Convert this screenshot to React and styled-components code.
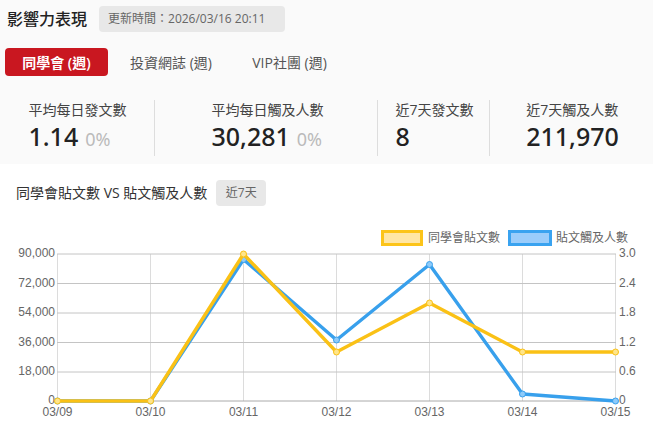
import React from "react";
import styled, { createGlobalStyle } from "styled-components";

const Global = createGlobalStyle`
  html, body { margin: 0; padding: 0; background: #fff; }
  body { font-family: "Open Sans", "Noto Sans CJK TC", sans-serif; overflow: hidden; }
`;
const Page = styled.div`width: 653px; height: 423px; overflow: hidden;`;
const Top = styled.section`background: #fafafa; height: 164px; padding-top: 6px; box-sizing: border-box;`;
const Header = styled.header`display: flex; align-items: center; padding-left: 7px; gap: 12px; height: 26px;`;
const Title = styled.h1`margin: 0; font-size: 16px; font-weight: 500; line-height: 26px; color: #222;`;
const Updated = styled.span`
  background: #e8e8e8; border-radius: 4px; color: #666; font-size: 12px; line-height: 26px;
  padding: 0 9px; width: 186px; box-sizing: border-box; white-space: nowrap;
`;
const Tabs = styled.nav`display: flex; margin: 16px 0 0 5px; height: 28px;`;
const Tab = styled.button`
  border: 0; border-radius: 4px; height: 28px; padding: 0; margin: 0; cursor: pointer;
  font: ${p => (p.$active ? 600 : 400)} 14px "Open Sans", "Noto Sans CJK TC", sans-serif;
  width: ${p => p.$width}px; white-space: nowrap;
  background: ${p => (p.$active ? "#c91720" : "transparent")};
  color: ${p => (p.$active ? "#fff" : "#555")};
`;
const Stats = styled.div`
  display: grid; grid-template-columns: 154px 223px 112px 1fr; margin: 24px 0 0 1px; height: 56px;
`;
const Stat = styled.div`
  display: flex; justify-content: center; height: 56px; box-sizing: border-box;
  padding-left: ${p => p.$shift}px;
  border-right: ${p => (p.$last ? "0" : "1px solid #ddd")};
`;
const StatBody = styled.div`display: flex; flex-direction: column;`;
const StatLabel = styled.div`font-size: 14px; line-height: 20px; color: #444; white-space: nowrap;`;
const StatValue = styled.div`
  font-family: "Noto Sans", "Noto Sans CJK TC", sans-serif;
  font-size: 25px; line-height: 32px; color: #222; font-weight: 500; white-space: nowrap;
  display: flex; align-items: baseline; gap: 7px;
`;
const Delta = styled.span`font-size: 18px; font-weight: 400; color: #bbb;`;
const ChartSection = styled.section`background: #fff;`;
const ChartHead = styled.div`display: flex; align-items: center; gap: 9px; padding: 16px 0 0 16px; height: 26px;`;
const ChartTitle = styled.h2`margin: 0; font-size: 14px; font-weight: 400; color: #333; line-height: 26px; white-space: nowrap;`;
const RangeTag = styled.span`
  background: #e8e8e8; border-radius: 4px; color: #666; font-size: 12px; line-height: 26px;
  width: 50px; text-align: center;
`;
const ChartSvg = styled.svg`display: block; font-family: "Liberation Sans", "Noto Sans CJK TC", sans-serif;`;

const xs = [57.5, 150.5, 243.5, 336.5, 429.5, 522.5, 615.5];
const grid = [254, 283.5, 313, 342.5, 372, 401];
const left = ["90,000", "72,000", "54,000", "36,000", "18,000", "0"];
const right = ["3.0", "2.4", "1.8", "1.2", "0.6", "0"];
const days = ["03/09", "03/10", "03/11", "03/12", "03/13", "03/14", "03/15"];
const blue = [401, 401, 259.5, 340, 264.5, 394, 401];
const yellow = [401, 401, 254, 352, 303, 352, 352];
const OY = 206; // svg top in page coordinates
const pts = a => a.map((y, i) => `${xs[i]},${y - OY}`).join(" ");

const Series = ({ data, stroke, fill }) => (
  <g>
    <polyline points={pts(data)} fill="none" stroke={stroke} strokeWidth="3.4" strokeLinejoin="round" />
    {data.map((y, i) => (
      <circle key={i} cx={xs[i]} cy={y - OY} r="3" fill={fill} stroke={stroke} strokeWidth="1" />
    ))}
  </g>
);

const Chart = () => (
  <ChartSvg width="653" height="217" viewBox="0 0 653 217">
    <rect x="382.5" y="25.5" width="39" height="13" fill="#ffe6a5" stroke="#fcc419" strokeWidth="3" />
    <text x="428" y="36" fontSize="12" fill="#666">同學會貼文數</text>
    <rect x="509.5" y="25.5" width="41" height="13" fill="#9bcdfb" stroke="#3aa3f0" strokeWidth="3" />
    <text x="556" y="36" fontSize="12" fill="#666">貼文觸及人數</text>
    {xs.map((x, i) => (
      <line key={i} x1={x} x2={x} y1={48} y2={195} stroke="#dcdcdc" />
    ))}
    {grid.map((y, i) => (
      <line key={i} x1="57" x2="616" y1={y - OY} y2={y - OY} stroke={i === 5 ? "#aaa" : "#c4c4c4"} />
    ))}
    {left.map((t, i) => (
      <text key={t} x="55" y={grid[i] - OY + 3} fontSize="12" fill="#666" textAnchor="end">{t}</text>
    ))}
    {right.map((t, i) => (
      <text key={t} x="619" y={grid[i] - OY + 3} fontSize="12" fill="#666">{t}</text>
    ))}
    {days.map((t, i) => (
      <text key={t} x={xs[i]} y="210" fontSize="12" fill="#666" textAnchor="middle">{t}</text>
    ))}
    <Series data={blue} stroke="#38a0ec" fill="#8ecbfa" />
    <Series data={yellow} stroke="#fac116" fill="#ffe58a" />
  </ChartSvg>
);

const stats = [
  { label: "平均每日發文數", value: "1.14", delta: "0%", shift: 0 },
  { label: "平均每日觸及人數", value: "30,281", delta: "0%", shift: 3 },
  { label: "近7天發文數", value: "8", shift: 2 },
  { label: "近7天觸及人數", value: "211,970", shift: 2 },
];

export default function App() {
  return (
    <Page>
      <Global />
      <Top>
        <Header>
          <Title>影響力表現</Title>
          <Updated>更新時間：2026/03/16 20:11</Updated>
        </Header>
        <Tabs>
          <Tab $active $width={103}>同學會 (週)</Tab>
          <Tab $width={126}>投資網誌 (週)</Tab>
          <Tab $width={111}>VIP社團 (週)</Tab>
        </Tabs>
        <Stats>
          {stats.map((s, i) => (
            <Stat key={s.label} $last={i === 3} $shift={s.shift}>
              <StatBody>
                <StatLabel>{s.label}</StatLabel>
                <StatValue>
                  {s.value}
                  {s.delta && <Delta>{s.delta}</Delta>}
                </StatValue>
              </StatBody>
            </Stat>
          ))}
        </Stats>
      </Top>
      <ChartSection>
        <ChartHead>
          <ChartTitle>同學會貼文數 VS 貼文觸及人數</ChartTitle>
          <RangeTag>近7天</RangeTag>
        </ChartHead>
        <Chart />
      </ChartSection>
    </Page>
  );
}
